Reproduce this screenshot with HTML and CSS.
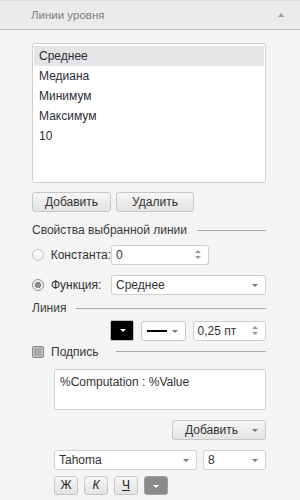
FILE: index.html
```html
<!DOCTYPE html>
<html lang="ru">
<head>
    <meta charset="UTF-8">
    <title>Линии уровня</title>
    <link rel="stylesheet" href="styles.css">
</head>
<body>
    <div class="header">
        <span>Линии уровня</span>
        <span class="collapse"></span>
    </div>

    <div class="panel">
        <div class="list">
            <div class="item selected">Среднее</div>
            <div class="item">Медиана</div>
            <div class="item">Минимум</div>
            <div class="item">Максимум</div>
            <div class="item">10</div>
        </div>

        <div class="btn-row">
            <button class="btn btn-add">Добавить</button>
            <button class="btn btn-del">Удалить</button>
        </div>

        <div class="section">
            <span>Свойства выбранной линии</span>
            <span class="rule"></span>
        </div>

        <div class="field">
            <label class="radio-label"><span class="radio"></span>Константа:</label>
            <div class="spin spin-const">
                <span>0</span>
                <span class="arrows"><i class="up"></i><i class="down"></i></span>
            </div>
        </div>

        <div class="field field-func">
            <label class="radio-label"><span class="radio checked"></span>Функция:</label>
            <div class="select select-func">
                <span>Среднее</span>
                <i class="caret"></i>
            </div>
        </div>

        <div class="section section-line">
            <span>Линия</span>
            <span class="rule"></span>
        </div>

        <div class="line-tools">
            <div class="color-btn"><i class="caret white"></i></div>
            <div class="style-btn"><span class="stroke"></span><i class="caret"></i></div>
            <div class="spin spin-width">
                <span>0,25 пт</span>
                <span class="arrows"><i class="up"></i><i class="down"></i></span>
            </div>
        </div>

        <div class="section section-caption">
            <label class="check-label"><span class="checkbox"></span>Подпись</label>
            <span class="rule"></span>
        </div>

        <div class="caption-box">%Computation : %Value</div>

        <div class="add-row">
            <div class="btn btn-drop">
                <span>Добавить</span>
                <i class="caret"></i>
            </div>
        </div>

        <div class="font-row">
            <div class="select select-font"><span>Tahoma</span><i class="caret"></i></div>
            <div class="select select-size"><span>8</span><i class="caret"></i></div>
        </div>

        <div class="format-row">
            <div class="fmt">Ж</div>
            <div class="fmt italic">К</div>
            <div class="fmt underline">Ч</div>
            <div class="fmt fmt-color"><i class="caret white"></i></div>
        </div>
    </div>
</body>
</html>
```

FILE: styles.css
```css
body {
    margin: 0;
    background-color: #f4f4f4;
    font-family: "Liberation Sans", Arial, sans-serif;
    font-size: 11px;
    color: #333;
}
.header {
    height: 28px;
    display: flex;
    align-items: center;
    justify-content: space-between;
    padding: 0 16px 0 31px;
    background-color: #ebebeb;
    border-top: 1px solid #dcdcdc;
    border-bottom: 1px solid #c4c4c4;
    color: #808080;
    font-size: 11.5px;
}
.collapse {
    width: 0;
    height: 0;
    border-left: 3px solid transparent;
    border-right: 3px solid transparent;
    border-bottom: 4px solid #9a9a9a;
}
.panel {
    padding: 13px 34px 0 32px;
}
.list {
    height: 134px;
    padding: 2px 1px;
    background-color: #fff;
    border: 1px solid #cfcfcf;
    border-radius: 3px;
}
.item {
    height: 20px;
    line-height: 20px;
    padding-left: 5px;
    font-size: 12px;
    color: #2b2b3a;
}
.item.selected {
    background-color: #e5e5e5;
}
.btn-row {
    display: flex;
    gap: 5px;
    margin-top: 9px;
}
.btn {
    height: 20px;
    padding: 0;
    border: 1px solid #c6c6c6;
    border-radius: 3px;
    background: linear-gradient(#f6f6f6, #e3e3e3);
    font-family: inherit;
    font-size: 12px;
    color: #333;
}
.btn-add {
    width: 79px;
}
.btn-del {
    width: 78px;
}
.section {
    display: flex;
    align-items: center;
    height: 16px;
    margin-top: 10px;
    font-size: 12px;
    color: #3a3a3a;
}
.rule {
    flex: 1;
    margin-left: 10px;
    border-top: 1px solid #a8a8a8;
}
.field {
    display: flex;
    align-items: center;
    margin-top: 7px;
}
.field-func {
    margin-top: 10px;
}
.radio-label, .check-label {
    display: flex;
    align-items: center;
    width: 79px;
    font-size: 12px;
    color: #333;
}
.radio {
    width: 10px;
    height: 10px;
    margin-right: 7px;
    border: 1px solid #c8c8c8;
    border-radius: 50%;
    background: linear-gradient(#fff, #ececec);
    box-sizing: content-box;
}
.radio.checked {
    border-color: #8f8f8f;
    background: radial-gradient(circle, #8c8c8c 0, #8c8c8c 3px, #f0f0f0 3.5px);
}
.spin, .select {
    position: relative;
    display: flex;
    align-items: center;
    height: 18px;
    padding-left: 4px;
    background-color: #fff;
    border: 1px solid #cfcfcf;
    border-radius: 3px;
    font-size: 12px;
    color: #333;
}
.spin-const {
    width: 92px;
}
.select-func {
    width: 149px;
}
.arrows {
    position: absolute;
    right: 7px;
    top: 4px;
    display: flex;
    flex-direction: column;
    gap: 3px;
}
.arrows .up, .arrows .down {
    display: block;
    width: 0;
    height: 0;
    border-left: 3px solid transparent;
    border-right: 3px solid transparent;
}
.arrows .up {
    border-bottom: 3px solid #999;
}
.arrows .down {
    border-top: 3px solid #999;
}
.caret {
    position: absolute;
    right: 7px;
    top: 8px;
    width: 0;
    height: 0;
    border-left: 3px solid transparent;
    border-right: 3px solid transparent;
    border-top: 3px solid #777;
}
.caret.white {
    border-top-color: #fff;
}
.section-line {
    margin-top: 5px;
}
.line-tools {
    display: flex;
    align-items: center;
    gap: 7px;
    margin-top: 4px;
    padding-left: 78px;
}
.color-btn {
    position: relative;
    width: 22px;
    height: 19px;
    background-color: #000;
    border: 1px solid #bdbdbd;
    border-radius: 2px;
}
.style-btn {
    position: relative;
    width: 43px;
    height: 18px;
    background-color: #fff;
    border: 1px solid #c6c6c6;
    border-radius: 3px;
}
.stroke {
    position: absolute;
    left: 5px;
    top: 8px;
    width: 20px;
    border-top: 2px solid #000;
}
.spin-width {
    width: 68px;
}
.section-caption {
    margin-top: 4px;
    height: 13px;
}
.checkbox {
    width: 10px;
    height: 10px;
    margin-right: 7px;
    border: 1px solid #858585;
    border-radius: 2px;
    background-color: #a9a9a9;
    box-shadow: inset 0 0 0 1px #c7c7c7;
}
.check-label {
    width: auto;
}
.section-caption .rule {
    margin-left: 17px;
}
.caption-box {
    height: 30px;
    margin: 11px 0 0 22px;
    padding: 5px 5px 4px;
    background-color: #fff;
    border: 1px solid #cfcfcf;
    border-radius: 3px;
    font-size: 12px;
    color: #333;
}
.add-row {
    display: flex;
    justify-content: flex-end;
    margin-top: 10px;
}
.btn-drop {
    position: relative;
    display: flex;
    align-items: center;
    width: 80px;
    height: 18px;
    padding-left: 12px;
}
.font-row {
    display: flex;
    gap: 6px;
    margin: 10px 0 0 22px;
}
.select-font {
    width: 137px;
}
.select-size {
    flex: 1;
}
.format-row {
    display: flex;
    gap: 6px;
    margin: 6px 0 0 22px;
}
.fmt {
    position: relative;
    width: 22px;
    height: 17px;
    line-height: 17px;
    text-align: center;
    border: 1px solid #c6c6c6;
    border-radius: 3px;
    background: linear-gradient(#f6f6f6, #e3e3e3);
    font-size: 12px;
    color: #222;
}
.fmt.italic {
    font-style: italic;
}
.fmt.underline {
    text-decoration: underline;
}
.fmt-color {
    background: #8a8a8a;
    border-color: #a0a0a0;
}
.fmt-color .caret {
    right: 8px;
}
```
